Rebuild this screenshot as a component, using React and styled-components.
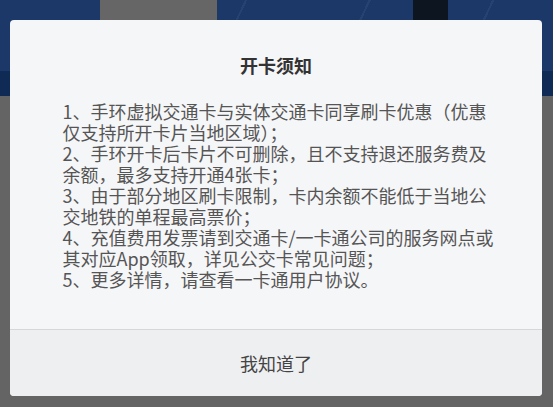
import React from "react";
import styled, { createGlobalStyle } from "styled-components";

const GlobalStyle = createGlobalStyle`
    html, body {
        margin: 0;
        padding: 0;
        background: #646464;
    }
    body {
        font-family: "Noto Sans CJK SC", "Noto Sans", sans-serif;
    }
`

const rules = [
    "1、手环虚拟交通卡与实体交通卡同享刷卡优惠（优惠仅支持所开卡片当地区域）；",
    "2、手环开卡后卡片不可删除，且不支持退还服务费及余额，最多支持开通4张卡；",
    "3、由于部分地区刷卡限制，卡内余额不能低于当地公交地铁的单程最高票价；",
    "4、充值费用发票请到交通卡/一卡通公司的服务网点或其对应App领取，详见公交卡常见问题；",
    "5、更多详情，请查看一卡通用户协议。",
]

const App = () => {
    return (
        <Page>
            <GlobalStyle />
            <Header>
                <Banner>
                    <Thumb />
                    <Spacer />
                    <DarkTab />
                </Banner>
                <Band />
            </Header>
            <Body />
            <Dialog>
                <Content>
                    <Title>开卡须知</Title>
                    <Rules>
                        {rules.map((text, index) => {
                            return <li key={index}>{text}</li>
                        })}
                    </Rules>
                </Content>
                <Footer>
                    <Button>我知道了</Button>
                </Footer>
            </Dialog>
        </Page>
    )
}

export default App

const Page = styled.div`
    position: relative;
    width: 553px;
    height: 407px;
    overflow: hidden;
    display: flex;
    flex-direction: column;
`

const Header = styled.div`
    display: flex;
    flex-direction: column;
    height: 96px;
`

const Banner = styled.div`
    display: flex;
    align-items: flex-start;
    height: 71px;
    padding-left: 100px;
    background-color: #1b3868;
    background-image: repeating-linear-gradient(
        115deg,
        transparent 0px,
        transparent 110px,
        rgba(255, 255, 255, 0.05) 110px,
        rgba(255, 255, 255, 0.05) 112px
    );
`

const Thumb = styled.div`
    width: 117px;
    height: 22px;
    background: #666666;
`

const Spacer = styled.div`
    width: 196px;
`

const DarkTab = styled.div`
    width: 35px;
    height: 22px;
    background: #0d1520;
`

const Band = styled.div`
    flex: 1;
    background: #102a56;
`

const Body = styled.div`
    flex: 1;
    background: #646464;
`

const Dialog = styled.div`
    position: absolute;
    left: 10px;
    top: 20px;
    width: 532px;
    height: 376px;
    display: flex;
    flex-direction: column;
    background: #f5f6f8;
    border-radius: 4px;
    overflow: hidden;
`

const Content = styled.div`
    flex: 1;
    display: flex;
    flex-direction: column;
    align-items: center;
    padding: 33px 0 0 0;
`

const Title = styled.h2`
    margin: 0;
    font-size: 18px;
    line-height: 24px;
    font-weight: 700;
    color: #333333;
`

const Rules = styled.ol`
    list-style: none;
    margin: 24px 0 0 5px;
    padding: 0;
    width: 432px;

    li {
        font-size: 18px;
        line-height: 21px;
        color: #555555;
    }
`

const Footer = styled.div`
    height: 66px;
    display: flex;
    align-items: center;
    justify-content: center;
    border-top: 1px solid #d6d7d9;
    background: #eeeff1;
`

const Button = styled.button`
    border: none;
    background: transparent;
    font-family: inherit;
    font-size: 18px;
    color: #444444;
    padding: 0;
`
